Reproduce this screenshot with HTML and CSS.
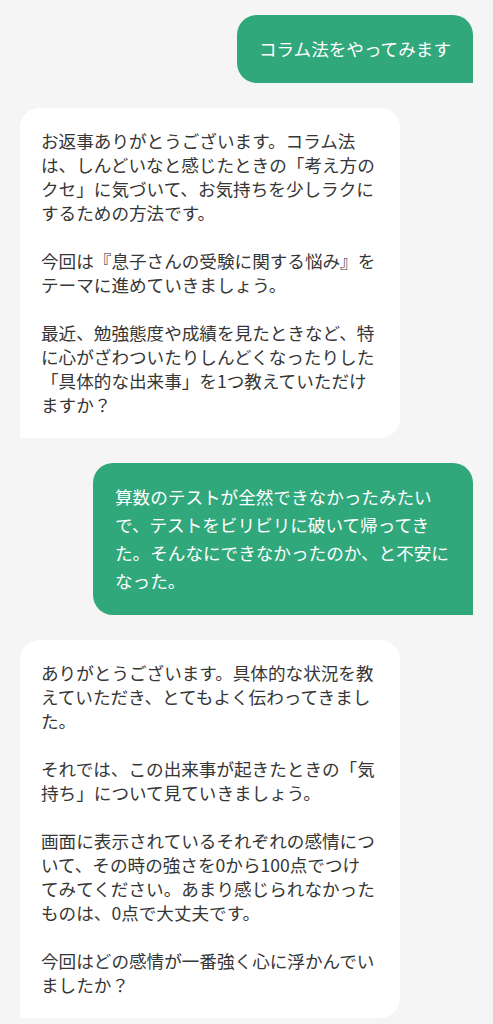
FILE: index.html
```html
<!DOCTYPE html>
<html lang="ja">
<head>
    <meta charset="UTF-8">
    <meta name="viewport" content="width=device-width, initial-scale=1.0">
    <title>コラム法</title>
    <link rel="stylesheet" href="styles.css">
</head>
<body>
    <div class="chat">
        <div class="msg msg--user">
            <p>コラム法をやってみます</p>
        </div>

        <div class="msg msg--bot">
            <p>お返事ありがとうございます。コラム法は、しんどいなと感じたときの「考え方のクセ」に気づいて、お気持ちを少しラクにするための方法です。</p>
            <p>今回は『息子さんの受験に関する悩み』をテーマに進めていきましょう。</p>
            <p>最近、勉強態度や成績を見たときなど、特に心がざわついたりしんどくなったりした「具体的な出来事」を1つ教えていただけますか？</p>
        </div>

        <div class="msg msg--user">
            <p>算数のテストが全然できなかったみたいで、テストをビリビリに破いて帰ってきた。そんなにできなかったのか、と不安になった。</p>
        </div>

        <div class="msg msg--bot">
            <p>ありがとうございます。具体的な状況を教えていただき、とてもよく伝わってきました。</p>
            <p>それでは、この出来事が起きたときの「気持ち」について見ていきましょう。</p>
            <p>画面に表示されているそれぞれの感情について、その時の強さを0から100点でつけてみてください。あまり感じられなかったものは、0点で大丈夫です。</p>
            <p>今回はどの感情が一番強く心に浮かんでいましたか？</p>
        </div>
    </div>
</body>
</html>
```

FILE: styles.css
```css
*{
    margin: 0;
    padding: 0;
    box-sizing: border-box;
}
html{
    background: #f5f5f5;
    font-family: "Noto Sans CJK JP", "Noto Sans", sans-serif;
    font-size: 16px;
}
body{
    min-height: 100vh;
}
.chat {
    display: flex;
    flex-direction: column;
    gap: 25px;
    padding: 15px 20px;
}
.msg {
    max-width: 380px;
    font-size: 1.1rem;
    border-radius: 20px;
}
.msg--user {
    align-self: flex-end;
    background: #31a87c;
    color: #ffffff;
    line-height: 28px;
    padding: 20px 22px;
    border-bottom-right-radius: 0;
}
.msg--bot {
    align-self: flex-start;
    width: 380px;
    background: #ffffff;
    color: #363636;
    line-height: 24px;
    padding: 21px 24px 21px 21px;
    border-bottom-left-radius: 0;
}
.msg--bot p + p {
    margin-top: 24px;
}
```
